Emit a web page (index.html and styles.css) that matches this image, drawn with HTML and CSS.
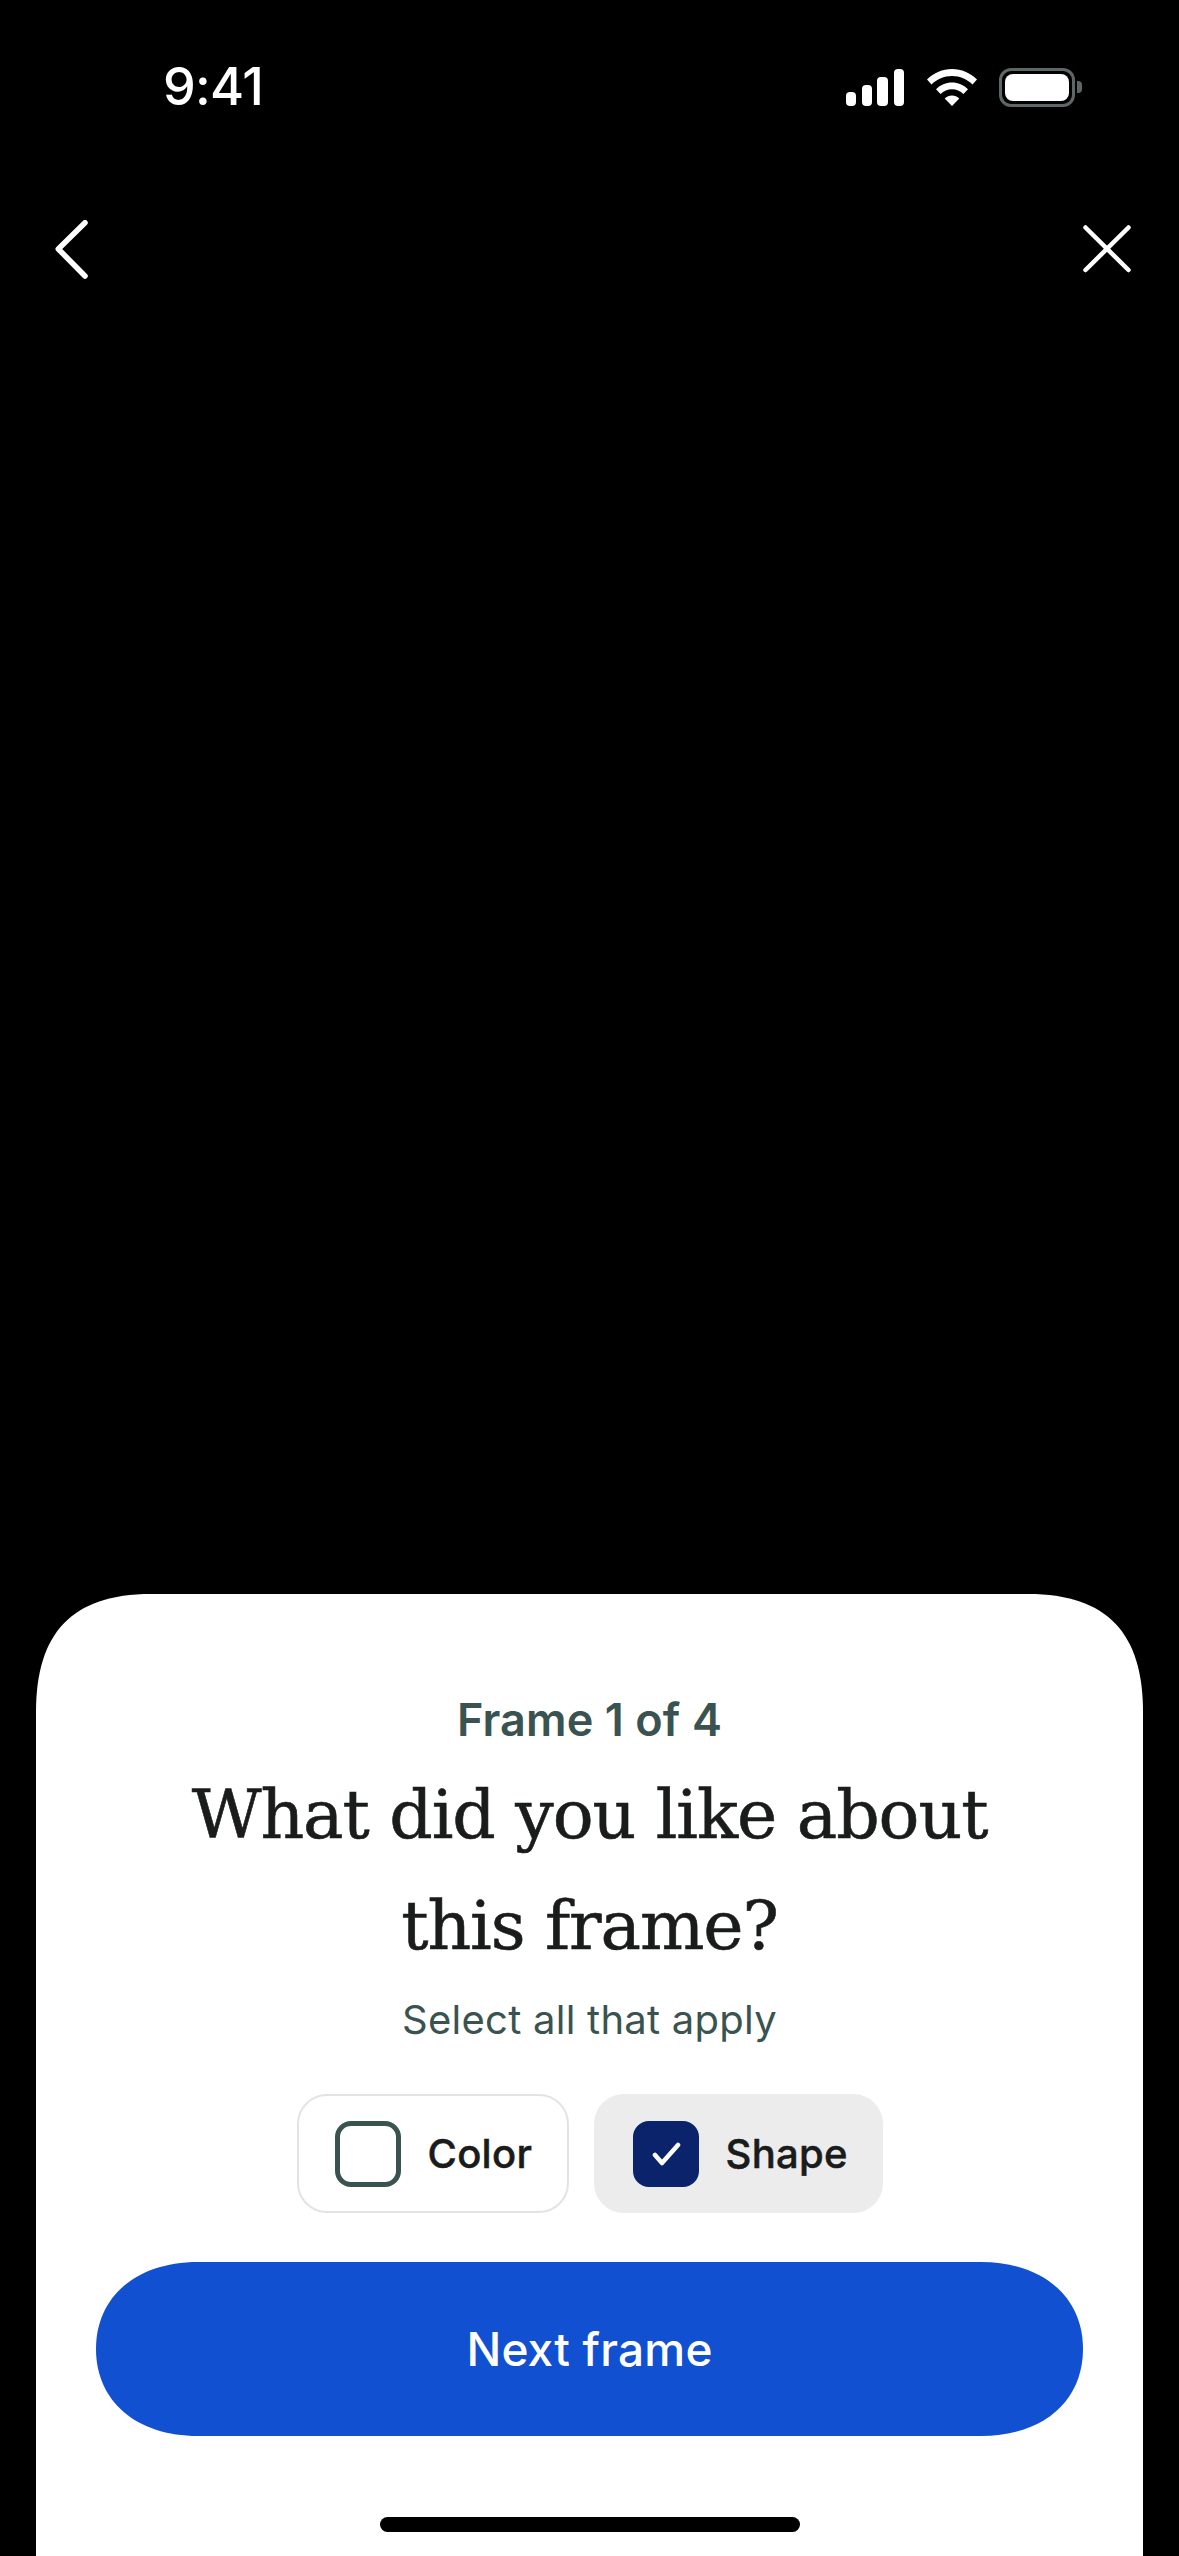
FILE: index.html
```html
<!DOCTYPE html>
<html lang="en">
<head>
<meta charset="utf-8">
<title>Frame feedback</title>
<link rel="stylesheet" href="styles.css">
</head>
<body>
<div class="screen">
  <div class="status">
    <span class="time">9:41</span>
    <div class="status-icons">
      <svg class="signal" width="58" height="37" viewBox="0 0 58 37"><rect x="0" y="23" width="10" height="14" rx="4" /><rect x="16" y="16" width="10" height="21" rx="4"/><rect x="31" y="8" width="11" height="29" rx="4"/><rect x="48" y="0" width="10" height="37" rx="4"/></svg>
      <svg class="wifi" width="50" height="37" viewBox="0 0 50 37"><path d="M25 0C34.500 0 43 3.800 50 10.500L45.500 15.500C40 10.200 33 7 25 7S10 10.200 4.500 15.500L0 10.500C7 3.800 15.500 0 25 0Z"/><path d="M25 13.500C31 13.500 36.500 15.900 41 20.200L36.500 25C33.300 22 29.300 20.300 25 20.300S16.700 22 13.500 25L9 20.200C13.500 15.900 19 13.500 25 13.500Z"/><path d="M25 26.500C27.800 26.500 30.200 27.500 32.300 29.400L25 37L17.700 29.400C19.800 27.500 22.200 26.500 25 26.500Z"/></svg>
      <div class="battery"><div class="battery-body"><div class="battery-fill"></div></div><div class="battery-cap"></div></div>
    </div>
  </div>
  <div class="nav">
    <svg class="nav-back" width="36" height="60" viewBox="0 0 36 60"><path d="M31 2.700L4.300 29L31 56" /></svg>
    <svg class="nav-close" width="48" height="60" viewBox="0 0 48 60"><path d="M2.500 7.500L45.500 50M45.500 7.500L2.500 50"/></svg>
  </div>
  <div class="spacer"></div>
  <section class="sheet">
    <p class="eyebrow">Frame 1 of 4</p>
    <h1 class="title">What did you like about<br>this frame?</h1>
    <p class="hint">Select all that apply</p>
    <div class="options">
      <div class="chip">
        <span class="box"></span>
        <span class="chip-label">Color</span>
      </div>
      <div class="chip chip-on">
        <span class="box box-on"><svg width="30" height="26" viewBox="0 0 30 26"><path d="M4 14L11 22L27 4"/></svg></span>
        <span class="chip-label">Shape</span>
      </div>
    </div>
    <button class="next">Next frame</button>
    <div class="home"></div>
  </section>
</div>
</body>
</html>
```
FILE: styles.css
```css
* { box-sizing: border-box; }
html, body { margin: 0; padding: 0; background: #000; }
.screen { width: 1179px; height: 2556px; display: flex; flex-direction: column; background: #000; overflow: hidden; font-family: Inter, "Liberation Sans", sans-serif; }
.status { display: flex; justify-content: space-between; align-items: center; height: 38px; margin-top: 68px; padding: 0 97px 0 163px; }
.time { color: #fff; font-size: 52px; font-weight: 500; line-height: 38px; letter-spacing: -0.7px; }
.status-icons { display: flex; align-items: center; }
.signal { fill: #fff; display: block; }
.wifi { fill: #fff; display: block; margin-left: 23px; }
.battery { display: flex; align-items: center; margin-left: 22px; }
.battery-body { width: 76px; height: 39px; border: 3px solid #5e6767; border-radius: 12px; padding: 3px; }
.battery-fill { width: 100%; height: 100%; background: #fff; border-radius: 8px; }
.battery-cap { width: 5px; height: 12px; margin-left: 2px; background: #5e6767; border-radius: 0 4px 4px 0; }
.nav { display: flex; justify-content: space-between; align-items: center; padding: 0 48px 0 54px; margin-top: 114px; height: 60px; }
.nav svg { display: block; fill: none; stroke: #fff; stroke-linecap: round; stroke-linejoin: round; }
.nav-back { stroke-width: 5.500; }
.nav-close { stroke-width: 4.500; }
.spacer { flex: 1; }
.sheet { height: 962px; margin: 0 36px; background: #fff; clip-path: path("M0 962V118C0 40 35 0 115 0H992C1072 0 1107 40 1107 118V962Z"); display: flex; flex-direction: column; align-items: center; padding-top: 100px; }
.eyebrow { margin: 0; color: #3a5350; font-size: 45px; font-weight: 600; line-height: 52px; letter-spacing: 0.1px; }
.title { margin: 13px 0 0; color: #1a1c1c; font-family: "DejaVu Serif", serif; font-size: 68px; font-weight: 400; line-height: 111px; letter-spacing: -1.1px; text-align: center; -webkit-text-stroke: 0.6px #1a1c1c; }
.hint { margin: 15px 0 0; color: #3a5350; font-size: 40px; font-weight: 400; line-height: 48px; letter-spacing: 0.25px; }
.options { display: flex; gap: 25px; margin-top: 50px; }
.chip { display: flex; align-items: center; gap: 27px; height: 119px; width: 272px; padding-left: 36px; border: 2px solid #e1e4e4; border-radius: 30px; background: #fff; }
.chip-on { width: 289px; padding-left: 37px; background: #ececec; border-color: #ececec; }
.chip-label { color: #1a1c1c; font-size: 40px; font-weight: 500; letter-spacing: 0.3px; -webkit-text-stroke: 0.5px #1a1c1c; }
.box { display: flex; align-items: center; justify-content: center; width: 66px; height: 66px; border: 5px solid #3a5350; border-radius: 16px; }
.box-on { background: #0a236b; border-color: #0a236b; }
.box-on svg { display: block; flex: none; fill: none; stroke: #fff; stroke-width: 4.500; stroke-linecap: round; stroke-linejoin: round; }
.next { width: 987px; height: 174px; margin-top: 49px; border: 0; clip-path: path("M102 0H885C947 0 987 35 987 87S947 174 885 174H102C40 174 0 139 0 87S40 0 102 0Z"); background: #1150d0; color: #fff; font-family: inherit; font-size: 46px; font-weight: 500; letter-spacing: 0.2px; }
.home { width: 420px; height: 15px; margin-top: 81px; background: #000; border-radius: 8px; }
```
